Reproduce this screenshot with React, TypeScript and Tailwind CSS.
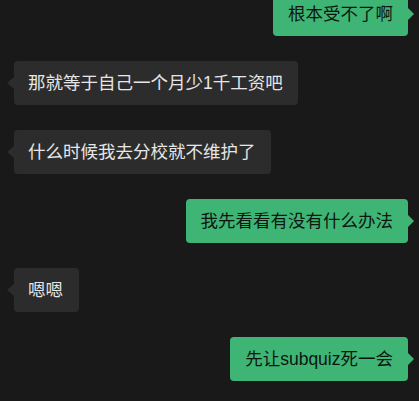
import React from "react";

type Msg = { text: string; me: boolean };

const msgs: Msg[] = [
  { text: "根本受不了啊", me: true },
  { text: "那就等于自己一个月少1千工资吧", me: false },
  { text: "什么时候我去分校就不维护了", me: false },
  { text: "我先看看有没有什么办法", me: true },
  { text: "嗯嗯", me: false },
  { text: "先让subquiz死一会", me: true },
];

function Bubble({ m }: { m: Msg }) {
  if (m.me) {
    return (
      <div className="flex justify-end">
        <div className="relative rounded-[4px] bg-[#3eb575] px-[15px] py-[10px] text-[17.5px] leading-[24px] text-[#0d1510]">
          {m.text}
          <div className="absolute right-[-6px] top-1/2 -translate-y-1/2 h-0 w-0 border-y-[6px] border-l-[6px] border-y-transparent border-l-[#3eb575]" />
        </div>
      </div>
    );
  }
  return (
    <div className="flex justify-start">
      <div className="relative rounded-[4px] bg-[#2c2c2c] pl-[14px] pr-[15.5px] py-[10px] text-[17.5px] leading-[24px] text-[#e6e6e6]">
        {m.text}
        <div className="absolute left-[-7px] top-1/2 -translate-y-1/2 h-0 w-0 border-y-[6px] border-r-[7px] border-y-transparent border-r-[#2c2c2c]" />
      </div>
    </div>
  );
}

export default function App() {
  return (
    <div
      className="h-[401px] w-[419px] overflow-hidden bg-[#191919]"
      style={{ fontFamily: '"Liberation Sans", "Noto Sans CJK SC", sans-serif' }}
    >
      <div className="-mt-[8px] flex flex-col gap-[25px] pl-[14px] pr-[11px]">
        {msgs.map((m, i) => (
          <Bubble key={i} m={m} />
        ))}
      </div>
    </div>
  );
}
